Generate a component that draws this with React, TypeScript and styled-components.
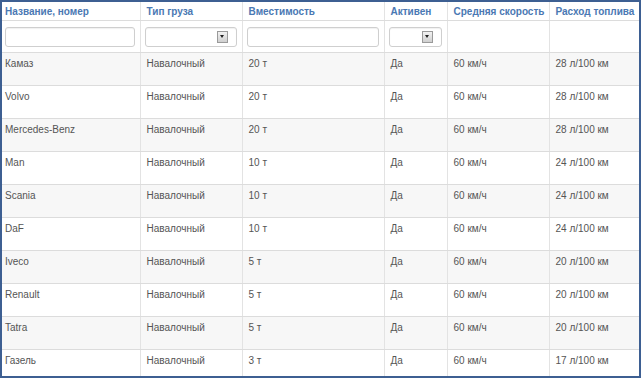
import React from 'react';
import styled, { createGlobalStyle } from 'styled-components';

interface Truck {
  name: string;
  cargo: string;
  capacity: string;
  active: string;
  speed: string;
  fuel: string;
}

const trucks: Truck[] = [
  { name: 'Камаз', cargo: 'Навалочный', capacity: '20 т', active: 'Да', speed: '60 км/ч', fuel: '28 л/100 км' },
  { name: 'Volvo', cargo: 'Навалочный', capacity: '20 т', active: 'Да', speed: '60 км/ч', fuel: '28 л/100 км' },
  { name: 'Mercedes-Benz', cargo: 'Навалочный', capacity: '20 т', active: 'Да', speed: '60 км/ч', fuel: '28 л/100 км' },
  { name: 'Man', cargo: 'Навалочный', capacity: '10 т', active: 'Да', speed: '60 км/ч', fuel: '24 л/100 км' },
  { name: 'Scania', cargo: 'Навалочный', capacity: '10 т', active: 'Да', speed: '60 км/ч', fuel: '24 л/100 км' },
  { name: 'DaF', cargo: 'Навалочный', capacity: '10 т', active: 'Да', speed: '60 км/ч', fuel: '24 л/100 км' },
  { name: 'Iveco', cargo: 'Навалочный', capacity: '5 т', active: 'Да', speed: '60 км/ч', fuel: '20 л/100 км' },
  { name: 'Renault', cargo: 'Навалочный', capacity: '5 т', active: 'Да', speed: '60 км/ч', fuel: '20 л/100 км' },
  { name: 'Tatra', cargo: 'Навалочный', capacity: '5 т', active: 'Да', speed: '60 км/ч', fuel: '20 л/100 км' },
  { name: 'Газель', cargo: 'Навалочный', capacity: '3 т', active: 'Да', speed: '60 км/ч', fuel: '17 л/100 км' },
];

const columns = [
  { title: 'Название, номер', width: 138 },
  { title: 'Тип груза', width: 102 },
  { title: 'Вместимость', width: 142 },
  { title: 'Активен', width: 63 },
  { title: 'Средняя скорость', width: 102 },
  { title: 'Расход топлива', width: 90 },
];

const GlobalStyle = createGlobalStyle`
  html, body {
    margin: 0;
    padding: 0;
    background: #ffffff;
  }
  body {
    font-family: "Liberation Sans", Arial, sans-serif;
  }
`

const Frame = styled.div`
  width: 641px;
  height: 378px;
  box-sizing: border-box;
  border: 2px solid #3d5f92;
  overflow: hidden;
  background: #ffffff;
`

const Table = styled.table`
  border-collapse: collapse;
  table-layout: fixed;
  width: 637px;
`

const HeadCell = styled.th`
  height: 18px;
  padding: 0 4px 0 6px;
  text-align: left;
  vertical-align: middle;
  font-size: 10px;
  font-weight: bold;
  color: #4a78b3;
  white-space: nowrap;
  overflow: hidden;
  border-left: 1px solid #e3e3e3;
  border-bottom: 1px solid #dcdcdc;

  &:first-child {
    border-left: none;
    padding-left: 3px;
  }
`

const FilterCell = styled.td`
  height: 31px;
  padding: 0 5px 0 4px;
  vertical-align: middle;
  border-left: 1px solid #e3e3e3;
  border-bottom: 1px solid #dcdcdc;

  &:first-child {
    border-left: none;
    padding-left: 3px;
  }
`

const TextFilter = styled.div`
  height: 20px;
  box-sizing: border-box;
  border: 1px solid #cfcfcf;
  border-radius: 3px;
  background: #ffffff;
  box-shadow: inset 0 1px 1px rgba(0, 0, 0, 0.06);
`

const SelectFilter = styled(TextFilter)`
  display: flex;
  align-items: center;
  justify-content: flex-end;
  padding-right: 8px;
`

const SelectButton = styled.div`
  width: 11px;
  height: 12px;
  box-sizing: border-box;
  border: 1px solid #9a9a9a;
  background: linear-gradient(#f2f2f2, #cfcfcf);
  display: flex;
  align-items: center;
  justify-content: center;
`

const Arrow = styled.div`
  width: 0;
  height: 0;
  border-left: 2px solid transparent;
  border-right: 2px solid transparent;
  border-top: 3px solid #222;
`

const Row = styled.tr<{ $striped: boolean }>`
  background: ${({ $striped }) => ($striped ? '#f7f7f7' : '#ffffff')};
`

const Cell = styled.td`
  height: 33px;
  padding: 3px 6px 0;
  vertical-align: top;
  font-size: 10px;
  line-height: 16px;
  color: #555555;
  white-space: nowrap;
  overflow: hidden;
  box-sizing: border-box;
  border-left: 1px solid #e3e3e3;
  border-bottom: 1px solid #dcdcdc;

  &:first-child {
    border-left: none;
    padding-left: 3px;
  }
`

const filters: ('text' | 'select' | 'none')[] = ['text', 'select', 'text', 'select', 'none', 'none'];

const App: React.FC = () => {
  return (
    <>
      <GlobalStyle />
      <Frame>
        <Table>
          <colgroup>
            {columns.map((c) => (
              <col key={c.title} style={{ width: c.width }} />
            ))}
          </colgroup>
          <thead>
            <tr>
              {columns.map((c) => (
                <HeadCell key={c.title}>{c.title}</HeadCell>
              ))}
            </tr>
            <tr>
              {filters.map((f, i) => (
                <FilterCell key={i}>
                  {f === 'text' && <TextFilter />}
                  {f === 'select' && (
                    <SelectFilter>
                      <SelectButton>
                        <Arrow />
                      </SelectButton>
                    </SelectFilter>
                  )}
                </FilterCell>
              ))}
            </tr>
          </thead>
          <tbody>
            {trucks.map((t, i) => (
              <Row key={t.name} $striped={i % 2 === 0}>
                <Cell>{t.name}</Cell>
                <Cell>{t.cargo}</Cell>
                <Cell>{t.capacity}</Cell>
                <Cell>{t.active}</Cell>
                <Cell>{t.speed}</Cell>
                <Cell>{t.fuel}</Cell>
              </Row>
            ))}
          </tbody>
        </Table>
      </Frame>
    </>
  );
}

export default App;
